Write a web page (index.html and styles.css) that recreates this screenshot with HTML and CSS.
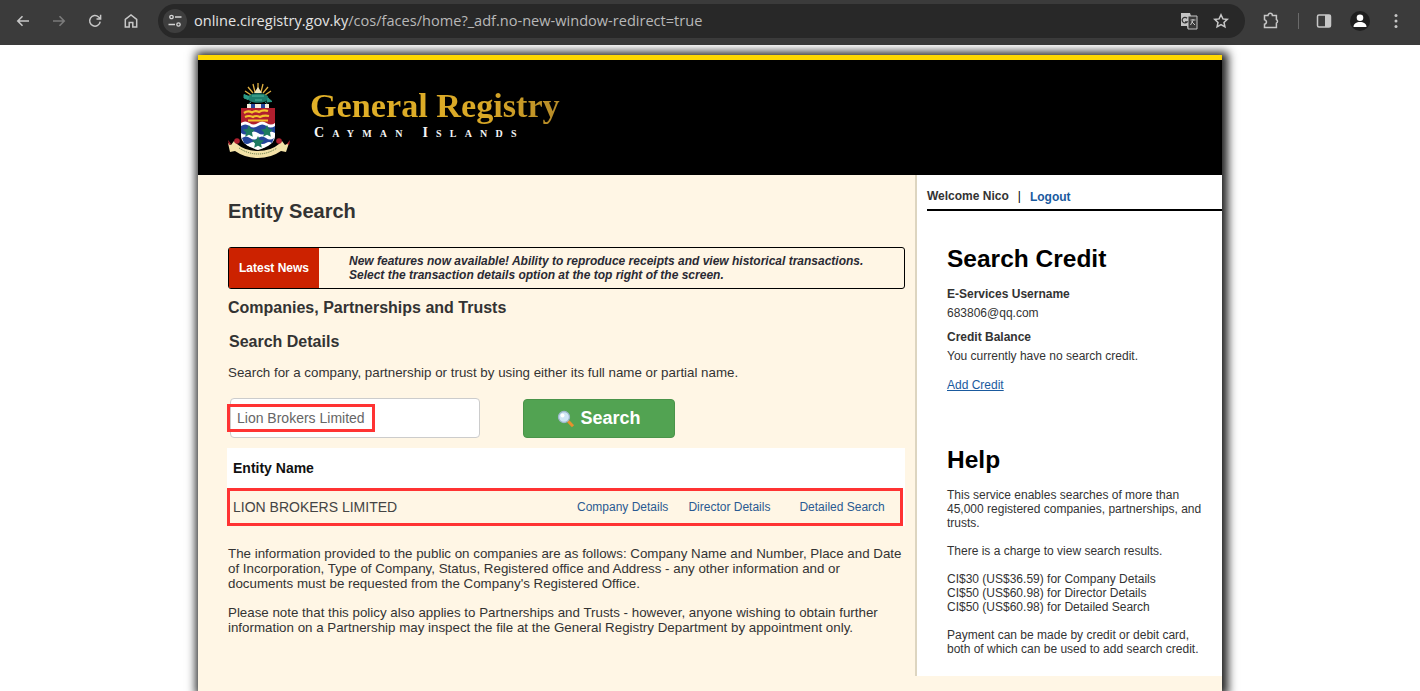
FILE: index.html
```html
<!DOCTYPE html>
<html lang="en">
<head>
  <meta charset="UTF-8">
  <title>Entity Search</title>
  <link rel="stylesheet" href="styles.css">
</head>
<body>
  <div class="toolbar">
    <svg class="tool" viewBox="0 0 16 16"><path d="M14 8H3M7.500 3.200 2.800 8l4.700 4.800" fill="none" stroke="#c7c7c7" stroke-width="1.600"/></svg>
    <svg class="tool" viewBox="0 0 16 16"><path d="M2 8h11M8.500 3.200 13.200 8l-4.700 4.800" fill="none" stroke="#7b7b7b" stroke-width="1.600"/></svg>
    <svg class="tool" viewBox="0 0 16 16"><path d="M13.200 8.600A5.300 5.300 0 1 1 11.600 4L13.400 5.600M13.600 1.800v4.100H9.500" fill="none" stroke="#c7c7c7" stroke-width="1.500"/></svg>
    <svg class="tool" viewBox="0 0 16 16"><path d="M2.300 14V6.400L8 2l5.700 4.400V14H9.800V9.400H6.200V14Z" fill="none" stroke="#c7c7c7" stroke-width="1.500"/></svg>
    <div class="omnibox">
      <span class="site-chip">
        <svg viewBox="0 0 16 16" width="16" height="16"><g fill="none" stroke="#d5d5d5" stroke-width="1.300"><circle cx="4.500" cy="4" r="1.700"/><path d="M8 4h6.500M1.500 11.500H8"/><circle cx="11.500" cy="11.500" r="1.700"/></g></svg>
      </span>
      <span class="url">online.ciregistry.gov.ky<span class="url-path">/cos/faces/home?_adf.no-new-window-redirect=true</span></span>
      <svg class="omni-icon translate" viewBox="0 0 18 18"><path d="M1 1h9l1 3h6v13H8l-1-3H1Z" fill="#c4c4c4"/><path d="M8 4h9v13H8Z" fill="#3a3a3a" stroke="#c4c4c4"/><path d="M7 6.200A2.800 2.800 0 1 0 7 10H5" fill="none" stroke="#333" stroke-width="1.300"/><path d="M10.500 8h5M13 7v1.500l-2.500 4.500M11.500 9.500l3.500 3.500" fill="none" stroke="#c4c4c4"/></svg>
      <svg class="omni-icon" viewBox="0 0 16 16"><path d="m8 1.800 1.900 4.100 4.400.5-3.300 3 .9 4.400L8 11.600l-3.900 2.200.9-4.400-3.300-3 4.400-.5Z" fill="none" stroke="#c7c7c7" stroke-width="1.500"/></svg>
    </div>
    <svg class="tool puzzle" viewBox="0 0 18 18"><path d="M2.500 3.500h3.500a2.200 2.200 0 0 1 4.400 0h4v4a2 2 0 0 1 0 3.600v4.400H2.500v-3.300a2.200 2.200 0 0 0 1.500-3.500 2 2 0 0 0-1.500-1Z" fill="none" stroke="#c7c7c7" stroke-width="1.500"/></svg>
    <span class="divider"></span>
    <svg class="tool panel" viewBox="0 0 16 16"><rect x="1.500" y="2" width="13" height="12" rx="1.500" fill="none" stroke="#c7c7c7" stroke-width="1.500"/><rect x="9" y="2" width="5.500" height="12" fill="#c7c7c7"/></svg>
    <span class="avatar"><svg viewBox="0 0 20 20" width="20" height="20"><circle cx="10" cy="6.800" r="3.300" fill="#fff"/><path d="M3.500 16c0-3.500 3-5 6.500-5s6.500 1.500 6.500 5Z" fill="#fff"/></svg></span>
    <svg class="tool kebab" viewBox="0 0 4 16"><circle cx="2" cy="2.500" r="1.500" fill="#c7c7c7"/><circle cx="2" cy="8" r="1.500" fill="#c7c7c7"/><circle cx="2" cy="13.500" r="1.500" fill="#c7c7c7"/></svg>
  </div>

  <div class="page">
    <div class="masthead">
      <svg class="crest" viewBox="0 0 64 76" width="64" height="76">
        <!-- rays and helm -->
        <path d="M31 1v9M26 2l2 8M36 2l-2 8M21 5l5 6M41 5l-5 6M18 9l6 4M44 9l-6 4" stroke="#e0b040" stroke-width="1.300"/>
        <path d="M27 11l4-6 4 6Z" fill="#f3e6bc"/>
        <!-- turtle -->
        <ellipse cx="31" cy="16" rx="10.500" ry="4.800" fill="#1d7d6c"/>
        <path d="M17 12.500l5 2-1 3-4-1.500ZM41 16l4 3.500-5 .5ZM24 20l-2.500 2M38 20l2.500 2" fill="#2b9a86" stroke="#2b9a86"/>
        <path d="M25 14h12M28 18h7" stroke="#54b59f"/>
        <!-- torse -->
        <path d="M20 22h22v4H20Z" fill="#f6efdc"/>
        <path d="M24 22h4v4h-4ZM34 22h4v4h-4Z" fill="#24459a"/>
        <!-- shield -->
        <path d="M14 26h34v28q0 9-17 14q-17-5-17-14Z" fill="#fff"/>
        <path d="M14 26h34v15q-4 3-8.500 0t-8.500 0-8.500 0-8.500 0Z" fill="#b01f2e"/>
        <path d="M17 31q4-3 8-.5 3-2.500 7-.5 4-2.500 9-1M18 35q4-2 8 0 3-2 7 0 4-2 9-1M21 38.500h20" fill="none" stroke="#f3c42c" stroke-width="2.200"/>
        <path d="M14 44q4.300-3 8.500 0t8.500 0 8.500 0 8.500 0v7q-4.300-3-8.500 0t-8.500 0-8.500 0-8.500 0ZM15 56q4-3 8 0t8 0 8 0 8 0l-2 5q-3-2-6 0t-8 0-8 0-6 0Z" fill="#24459a"/>
        <path d="m22 43 1.900 4 4.300.5-3.200 3 .8 4.300-3.800-2.100-3.800 2.100.8-4.300-3.200-3 4.300-.5ZM40 43l1.900 4 4.300.5-3.200 3 .8 4.300-3.800-2.100-3.800 2.100.8-4.300-3.200-3 4.300-.5ZM31 54l1.900 4 4.300.5-3.200 3 .8 4.300-3.800-2.100-3.800 2.100.8-4.300-3.200-3 4.300-.5Z" fill="#1d7a60"/>
        <!-- motto scroll -->
        <path d="M1 61l2 9 5-1q10 7 23 7t23-7l5 1 3-9-4 2-3-4-3 3q-8 7-21 7T10 62l-3-3-3 4Z" fill="#f3e2a8"/>
        <path d="M12 66q9 6 19 6t19-6" fill="none" stroke="#4a6a3a" stroke-dasharray="1 1"/>
        <circle cx="10" cy="59" r="2.800" fill="#b01f2e"/><circle cx="52" cy="59" r="2.800" fill="#b01f2e"/>
        <path d="M1 58l1 5 2-1ZM63 58l-1 5-2-1Z" fill="#b01f2e"/>
      </svg>
      <div class="brand">
        <div class="brand-name">General Registry</div>
        <div class="brand-sub">Cayman Islands</div>
      </div>
    </div>

    <div class="columns">
      <div class="main">
        <h1>Entity Search</h1>
        <div class="news">
          <div class="news-label">Latest News</div>
          <div class="news-text">New features now available! Ability to reproduce receipts and view historical transactions.<br>Select the transaction details option at the top right of the screen.</div>
        </div>
        <h2 class="section">Companies, Partnerships and Trusts</h2>
        <h2 class="details">Search Details</h2>
        <p class="intro">Search for a company, partnership or trust by using either its full name or partial name.</p>
        <div class="search-row">
          <div class="search-input"><span class="marked">Lion Brokers Limited</span></div>
          <div class="search-btn">
            <svg viewBox="0 0 18 18" width="18" height="18"><path d="m10.500 10.500 5.500 5.800" stroke="#e8912c" stroke-width="3"/><circle cx="7" cy="7" r="5.500" fill="#cfe6f5" stroke="#9db7cc" stroke-width="1.300"/><circle cx="5.500" cy="5.500" r="2" fill="#fff"/></svg>
            Search
          </div>
        </div>
        <div class="results">
          <div class="results-head">Entity Name</div>
          <div class="results-row">
            <span class="entity">LION BROKERS LIMITED</span>
            <a class="link-company">Company Details</a>
            <a class="link-director">Director Details</a>
            <a class="link-detailed">Detailed Search</a>
          </div>
        </div>
        <p class="note">The information provided to the public on companies are as follows: Company Name and Number, Place and Date of Incorporation, Type of Company, Status, Registered office and Address - any other information and or documents must be requested from the Company's Registered Office.</p>
        <p class="note">Please note that this policy also applies to Partnerships and Trusts - however, anyone wishing to obtain further information on a Partnership may inspect the file at the General Registry Department by appointment only.</p>
      </div>

      <div class="side">
        <div class="welcome"><b>Welcome Nico</b><span class="sep">|</span><a>Logout</a></div>
        <div class="side-body">
          <h2 class="side-title">Search Credit</h2>
          <div class="label">E-Services Username</div>
          <div class="value">683806@qq.com</div>
          <div class="label balance">Credit Balance</div>
          <div class="value">You currently have no search credit.</div>
          <a class="add-credit">Add Credit</a>
          <h2 class="side-title help">Help</h2>
          <p class="help-text">This service enables searches of more than 45,000 registered companies, partnerships, and trusts.</p>
          <p class="help-text">There is a charge to view search results.</p>
          <p class="help-text">CI$30 (US$36.59) for Company Details<br>CI$50 (US$60.98) for Director Details<br>CI$50 (US$60.98) for Detailed Search</p>
          <p class="help-text">Payment can be made by credit or debit card, both of which can be used to add search credit.</p>
        </div>
      </div>
    </div>
  </div>
</body>
</html>
```

FILE: styles.css
```css
html, body {
  height: 691px;
  overflow: hidden;
}
body {
  margin: 0;
  background: #fff;
  font-family: "Liberation Sans", Arial, sans-serif;
  color: #333;
}
h1, h2, p {
  margin: 0;
}

/* browser bar */
.toolbar {
  display: flex;
  align-items: center;
  height: 45px;
  box-sizing: border-box;
  padding: 0 0 4px 15px;
  background: #3b3b3b;
}
.tool {
  width: 16px;
  height: 16px;
  margin-right: 20px;
  flex: none;
}
.omnibox {
  display: flex;
  align-items: center;
  width: 1087px;
  height: 34px;
  margin-left: -1px;
  background: #282828;
  border-radius: 17px;
  flex: none;
}
.site-chip {
  display: flex;
  align-items: center;
  justify-content: center;
  width: 24px;
  height: 24px;
  margin: 0 7px 0 5px;
  background: #3e3e3e;
  border-radius: 50%;
}
.url {
  flex: 1;
  margin-bottom: 2px;
  font-family: "Open Sans", sans-serif;
  font-size: 14.570px;
  color: #e3e3e3;
  white-space: nowrap;
}
.url-path {
  color: #b8b8b8;
}
.omni-icon {
  width: 16px;
  height: 16px;
  margin-right: 16px;
}
.translate {
  width: 18px;
  height: 18px;
  margin-right: 15px;
}
.puzzle {
  width: 18px;
  height: 18px;
  margin: 0 0 0 17px;
}
.divider {
  width: 1px;
  height: 16px;
  margin: 0 17px 0 18px;
  background: #6a6a6a;
}
.panel {
  margin-right: 18px;
}
.avatar {
  display: flex;
  align-items: center;
  justify-content: center;
  width: 20px;
  height: 20px;
  margin-right: 24px;
  background: #1f1f1f;
  border-radius: 50%;
}
.kebab {
  width: 4px;
  margin: 0;
}

/* page */
.page {
  width: 1024px;
  min-height: 631px;
  margin: 10px 0 0 198px;
  background: #fff6e5;
  border-top: 5px solid #ffd800;
  box-shadow: 2px 1px 9px 4px #222;
}
.masthead {
  display: flex;
  align-items: center;
  height: 115px;
  padding-left: 29px;
  background: #000;
}
.crest {
  flex: none;
  margin-top: 5px;
}
.brand {
  margin: -8px 0 0 19px;
}
.brand-name {
  font-family: "Liberation Serif", serif;
  font-size: 34.200px;
  font-weight: bold;
  line-height: 36px;
  background: linear-gradient(90deg, #e2b128, #d9a826 70%, #b58a28);
  -webkit-background-clip: text;
  background-clip: text;
  color: transparent;
}
.brand-sub {
  font-family: "Liberation Serif", serif;
  font-size: 14px;
  font-weight: bold;
  font-variant: small-caps;
  letter-spacing: 8.200px;
  word-spacing: 0;
  line-height: 12px;
  margin: 3px 0 0 4px;
  color: #f4f4f4;
}

.columns {
  display: flex;
}
.main {
  width: 717px;
  box-sizing: border-box;
  padding: 0 10px 0 30px;
}
h1 {
  margin-top: 25px;
  font-size: 20px;
  line-height: 23px;
}
.news {
  display: flex;
  align-items: stretch;
  height: 42px;
  box-sizing: border-box;
  margin-top: 24px;
  border: 1px solid #000;
  border-radius: 3px;
}
.news-label {
  width: 90px;
  flex: none;
  background: #cc2200;
  color: #fff;
  font-size: 12px;
  font-weight: bold;
  line-height: 40px;
  text-align: center;
}
.news-text {
  padding: 6px 0 0 30px;
  color: #2a2a33;
  font-size: 12px;
  font-weight: bold;
  font-style: italic;
  line-height: 14px;
}
.section {
  margin-top: 10px;
  font-size: 16px;
  line-height: 18px;
}
.details {
  margin: 16px 0 0 1px;
  font-size: 16px;
  line-height: 18px;
}
.intro {
  margin-top: 14px;
  font-size: 13.330px;
  line-height: 16px;
}
.search-row {
  display: flex;
  margin-top: 17px;
}
.search-input {
  display: flex;
  align-items: center;
  width: 250px;
  height: 40px;
  box-sizing: border-box;
  margin-left: 2px;
  background: #fff;
  border: 1px solid #ccc;
  border-radius: 4px;
}
.marked {
  margin-left: -4px;
  padding: 3px 7px;
  border: 3px solid #f33;
  font-size: 14px;
  line-height: 16px;
  color: #666;
}
.search-btn {
  display: flex;
  align-items: center;
  justify-content: center;
  gap: 5px;
  width: 152px;
  height: 39px;
  box-sizing: border-box;
  margin: 1px 0 0 43px;
  background: #52a352;
  border: 1px solid #4a944a;
  border-radius: 4px;
  color: #fff;
  font-size: 18px;
  font-weight: bold;
}
.results {
  margin: 10px 0 0 -1px;
  background: #fff;
}
.results-head {
  height: 40px;
  padding-left: 6px;
  background: #fff;
  color: #111;
  font-size: 14px;
  font-weight: bold;
  line-height: 40px;
}
.results-row {
  display: flex;
  align-items: center;
  height: 38px;
  box-sizing: border-box;
  margin-right: 2px;
  background: #fff6e5;
  border: 3px solid #f33;
  font-size: 12px;
}
.entity {
  width: 344px;
  padding-left: 3px;
  font-size: 14px;
  color: #444;
}
.results-row a {
  color: #2a5a92;
}
.link-director {
  margin-left: 20px;
}
.link-detailed {
  margin-left: 29px;
}
.note {
  margin-top: 14px;
  font-size: 13.330px;
  line-height: 15px;
}
.results + .note {
  margin-top: 20px;
}

/* right column */
.side {
  width: 305px;
  height: 501px;
  background: #fff;
  border-left: 2px solid #ddd5c0;
}
.welcome {
  display: flex;
  align-items: flex-start;
  height: 34px;
  margin-left: 10px;
  border-bottom: 2px solid #000;
  font-size: 12px;
  line-height: 43px;
}
.welcome a {
  margin-top: 1px;
  color: #1a5a9e;
  font-weight: bold;
}
.sep {
  margin: 0 9px;
  color: #000;
}
.side-body {
  padding: 33px 20px 0 30px;
}
.side-title {
  font-size: 24.500px;
  line-height: 30px;
  color: #000;
}
.label {
  margin-top: 13px;
  font-size: 12px;
  font-weight: bold;
  line-height: 14px;
}
.balance {
  margin-top: 10px;
}
.value {
  margin-top: 5px;
  font-size: 12px;
  line-height: 14px;
}
.add-credit {
  display: block;
  margin-top: 15px;
  font-size: 12px;
  line-height: 14px;
  color: #1a5a9e;
  text-decoration: underline;
}
.help {
  margin-top: 53px;
}
.help-text {
  margin-top: 14px;
  font-size: 12px;
  line-height: 14px;
}
.help + .help-text {
  margin-top: 13px;
}
```
